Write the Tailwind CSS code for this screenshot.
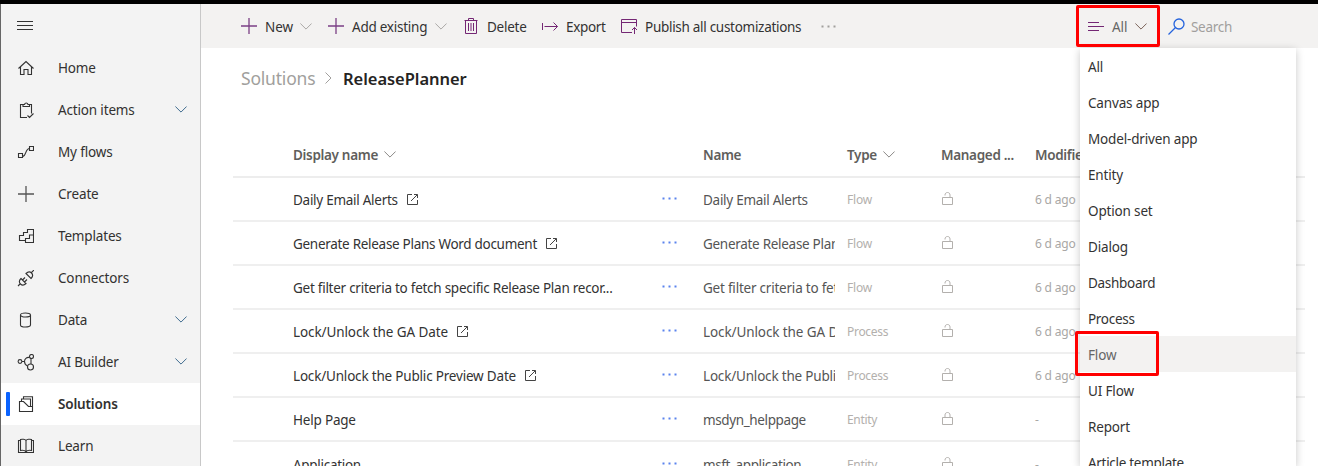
<!DOCTYPE html>
<html lang="en">
<head>
<meta charset="utf-8">
<title>ReleasePlanner</title>
<script src="https://cdn.jsdelivr.net/npm/@tailwindcss/browser@4"></script>
</head>
<body class="h-[466px] w-[1318px] overflow-hidden bg-white font-['Noto_Sans',sans-serif] text-[13.5px] leading-5 tracking-[-0.2px] text-[#323130]">
<svg class="hidden">
  <symbol id="down" viewBox="0 0 12 7"><path d="M.4.5 6 6.1 11.6.5" fill="none" stroke="currentColor"/></symbol>
  <symbol id="open" viewBox="0 0 11 11"><path d="M5 .5H.5v10h10V6M7 .5h3.5V4M10.3.7 4 7" fill="none" stroke="currentColor"/></symbol>
  <symbol id="dots" viewBox="0 0 16 3"><path d="M.5.5h2v2h-2zM6.5.5h2v2h-2zM12.5.5h2v2h-2z" fill="currentColor"/></symbol>
  <symbol id="unlock" viewBox="0 0 11 13"><path d="M.5 5.500h10v7H.5zM3 3.500V3C3 1.500 4 .5 5.500.5S8 1.500 8 3v2.500" fill="none" stroke="currentColor"/></symbol>
  <symbol id="lock" viewBox="0 0 11 13"><path d="M.5 5.500h10v7H.5zM3 5.500V3C3 1.500 4 .5 5.500.5S8 1.500 8 3v2.500" fill="none" stroke="currentColor"/></symbol>
  <symbol id="plus" viewBox="0 0 16 16"><path d="M8 0v16M0 8h16" fill="none" stroke="currentColor" stroke-width="1.3"/></symbol>
</svg>
<div class="h-1 bg-black"></div>
<div class="flex h-[462px]">
  <nav class="w-[201px] shrink-0 border-r border-l border-l-[#666] border-r-[#c8c8c8] bg-[#f3f3f3] tracking-[-0.16px]">
    <div class="flex h-[43px] items-center pl-4"><svg class="h-[9px] w-4" viewBox="0 0 16 9"><path d="M0 .5h16M0 4.500h16M0 8.500h16" stroke="#333"/></svg></div>
    <a class="flex h-[42px] items-center pl-4"><svg class="mr-6 size-[17px]" viewBox="0 0 17 17" fill="none" stroke="#333" stroke-width="1.1"><path d="M1.500 8.500 9 1.500l7.500 7M3.500 7v7.500H7V9.500h4v5h3.500V7"/></svg><span>Home</span></a>
    <a class="flex h-[42px] items-center pl-4"><svg class="mr-6 size-[17px]" viewBox="0 0 17 17" fill="none" stroke="#333" stroke-width="1.1"><path d="M10 15.500H3.500v-13H6M12 2.500h2.500v9M6 4.500v-2h1.500C8 .5 10.500.5 11 2.500h1.500v2zM10.500 13.500l2 2 4-4"/></svg><span class="flex-1">Action items</span><svg class="mr-[13px] mb-[2px] h-[7px] w-3 text-[#3f6c8f]"><use href="#down"/></svg></a>
    <a class="flex h-[42px] items-center pl-4"><svg class="mr-6 size-[17px]" viewBox="0 0 17 17" fill="none" stroke="#333" stroke-width="1.1"><path d="M1.500 9.500h4v4h-4zM12.500 2.500h4v4h-4zM5.500 12.500C9.500 12.500 8 4.500 12.500 4.500"/></svg><span>My flows</span></a>
    <a class="flex h-[42px] items-center pl-4"><svg class="mr-6 size-[17px] pl-px pb-px text-[#555]"><use href="#plus"/></svg><span>Create</span></a>
    <a class="flex h-[42px] items-center pl-4"><svg class="mr-6 size-[17px]" viewBox="0 0 17 17" fill="none" stroke="#333" stroke-width="1.1"><path d="M8.500 14.500v-4h4V7h4v7.500zM8.500 12.500h-6v-5h4v-3h4v-3h6V7"/></svg><span>Templates</span></a>
    <a class="flex h-[42px] items-center pl-4"><svg class="mr-6 size-[17px]" viewBox="0 0 17 17" fill="none" stroke="#333" stroke-width="1.1"><path d="M1 16l2.500-2.500M14.500 2.500 17 0M4 8.500l5 5c-2 2-4 2-5.500.5S2 10.500 4 8.500zM9 3.500l5 5c2-2 2-4 .5-5.500S11 1.500 9 3.500zM5.500 10 8 7.500M7.500 12 10 9.500"/></svg><span>Connectors</span></a>
    <a class="flex h-[42px] items-center pl-4"><svg class="mr-6 size-[17px]" viewBox="0 0 17 17" fill="none" stroke="#333" stroke-width="1.1"><ellipse cx="8.500" cy="3" rx="5" ry="2"/><path d="M3.500 3v10c0 2.700 10 2.700 10 0V3"/></svg><span class="flex-1">Data</span><svg class="mr-[13px] mb-[2px] h-[7px] w-3 text-[#3f6c8f]"><use href="#down"/></svg></a>
    <a class="flex h-[42px] items-center pl-4"><svg class="mr-6 size-[17px]" viewBox="0 0 17 17" fill="none" stroke="#333" stroke-width="1.1"><circle cx="3" cy="7.500" r="1.900"/><circle cx="14.500" cy="2.500" r="2"/><circle cx="13.500" cy="13" r="3"/><path d="M12.500 3.500c-3-.5-5 1.500-5 4 0 2.300 1 3.500 3 4.500M5 7.500h2.500M14 4.500V10"/></svg><span class="flex-1">AI Builder</span><svg class="mr-[13px] mb-[2px] h-[7px] w-3 text-[#3f6c8f]"><use href="#down"/></svg></a>
    <a class="flex h-[42px] items-center bg-white pl-[5px]"><i class="mr-[7px] h-6 w-1 rounded-[1px] bg-[#0b63ff]"></i><svg class="mr-6 size-[17px]" viewBox="0 0 17 17" fill="none" stroke="#333" stroke-width="1.1"><path d="M2.500 5.500h4l5 5h4v5h-13zM4.500 5V3h9v7.500M6.500 3V.8h9V10.500"/></svg><span class="font-semibold">Solutions</span></a>
    <a class="flex h-[42px] items-center pl-4"><svg class="mr-6 size-[17px]" viewBox="0 0 17 17" fill="none" stroke="#333" stroke-width="1.1"><path d="M3.500 2.500h-2v12h15v-12h-2M9 14V2.500C8 1.200 5 1 3.500 1.500v11c2-.4 4.500-.2 5.500 1.500 1-1.700 3.500-1.900 5.500-1.500v-11C13 1 10 1.200 9 2.500"/></svg><span>Learn</span></a>
  </nav>
  <main class="min-w-0 flex-1">
    <header class="flex h-11 items-center bg-[#f3f2f1] pl-10 tracking-[-0.1px] text-[#333]">
      <div class="flex w-[87px] items-center"><svg class="mr-2 size-4 text-[#7b3f85]"><use href="#plus"/></svg><span class="flex-1 pt-[2px]">New</span><svg class="mr-4 h-[7px] w-3 text-[#a9a7a5]"><use href="#down"/></svg></div>
      <div class="flex w-[135px] items-center"><svg class="mr-2 size-4 text-[#7b3f85]"><use href="#plus"/></svg><span class="flex-1 pt-[2px] tracking-[-0.25px]">Add existing</span><svg class="mr-4 h-[7px] w-3 text-[#a9a7a5]"><use href="#down"/></svg></div>
      <div class="flex w-[79px] items-center"><svg class="mr-[9px] ml-px h-4 w-[14px]" viewBox="0 0 14 16" fill="none" stroke="#742774"><path d="M.5 2.500h13M4.500 2.500v-2h5v2M1.500 2.500v13h11v-13M4.500 5v8M7 5v8M9.500 5v8"/></svg><span class="pt-[2px] tracking-[-0.25px]">Delete</span></div>
      <div class="flex w-[79px] items-center"><svg class="mr-2 h-[9px] w-4" viewBox="0 0 16 9" fill="none" stroke="#742774"><path d="M.5 1v7M2.500 4.500h13M11.500.5l4 4-4 4"/></svg><span class="pt-[2px] tracking-[-0.35px]">Export</span></div>
      <div class="flex w-[200px] items-center"><svg class="mr-2 h-[15px] w-4" viewBox="0 0 16 15" fill="none" stroke="#742774"><path d="M11 13.500H.5V.5h15v7M.5 3.500h15M13.500 15V8.500M11 11l2.500-2.500L16 11"/></svg><span class="pt-[2px] tracking-[-0.29px]">Publish all customizations</span></div>
      <svg class="h-[3px] w-4 text-[#a19f9d]"><use href="#dots"/></svg>
      <div class="ml-[251px] flex items-center"><svg class="mr-2 h-[9px] w-4" viewBox="0 0 16 9"><path d="M0 .5h11M0 4.500h16M0 8.500h11" stroke="#742774"/></svg><span class="w-[23px] pt-[2px] text-[#666]">All</span><svg class="h-[7px] w-3 text-[#7a6258]"><use href="#down"/></svg></div>
      <div class="ml-[21px] flex items-center"><svg class="mr-[6px] size-[17px]" viewBox="0 0 17 17" fill="none" stroke="#2463dd" stroke-width="1.300"><circle cx="11" cy="6" r="5"/><path d="M7.500 9.500.5 16.500"/></svg><span class="pt-px tracking-[-0.3px] text-[#a19f9d]">Search</span></div>
    </header>
    <div class="flex h-[60px] items-center pl-10 text-[17.500px]"><span class="w-[84px] text-[#a19f9d]">Solutions</span><svg class="mr-[11px] h-3 w-[7px]" viewBox="0 0 7 12" fill="none" stroke="#a19f9d"><path d="m.5.500 5.500 5.500L.5 11.500"/></svg><span class="pt-px text-[16.500px] tracking-[-0.05px] font-semibold text-[#252423]">ReleasePlanner</span></div>
    <section class="mt-[25px] ml-8 w-[1072px] text-[#333]">
      <div class="grid h-[45px] grid-cols-[60px_369px_41px_132px_12px_94px_94px_270px] items-center border-b-2 border-[#ededed] pt-px font-semibold tracking-[-0.32px] text-[#605e5c]">
        <i></i><span class="flex items-center">Display name<svg class="mb-[2px] ml-[6px] h-[7px] w-3 text-[#8a8886]"><use href="#down"/></svg></span><i></i><span>Name</span><i></i><span class="flex items-center">Type<svg class="mb-[2px] ml-[6px] h-[7px] w-3 text-[#8a8886]"><use href="#down"/></svg></span><span>Managed ...</span><span>Modified</span>
      </div>
      <div class="grid h-11 grid-cols-[60px_369px_41px_132px_12px_94px_94px_270px] items-center border-b-2 border-[#efefef] pt-px"><i></i><span class="flex items-center tracking-[-0.27px]">Daily Email Alerts<svg class="ml-[9px] size-[11px] text-[#444]"><use href="#open"/></svg></span><svg class="mb-[2px] h-[3px] w-4 text-[#5b83ee]"><use href="#dots"/></svg><span class="overflow-hidden tracking-[-0.27px] whitespace-nowrap text-[#555]">Daily Email Alerts</span><i></i><span class="text-[12px] text-[#b3b0ad]">Flow</span><svg class="mb-[2px] ml-px h-[13px] w-[11px] text-[#b3b0ad]"><use href="#unlock"/></svg><span class="text-[12px] text-[#a9a7a5]">6 d ago</span></div>
      <div class="grid h-11 grid-cols-[60px_369px_41px_132px_12px_94px_94px_270px] items-center border-b-2 border-[#efefef] pt-px"><i></i><span class="flex items-center tracking-[-0.29px]">Generate Release Plans Word document<svg class="ml-[9px] size-[11px] text-[#444]"><use href="#open"/></svg></span><svg class="mb-[2px] h-[3px] w-4 text-[#5b83ee]"><use href="#dots"/></svg><span class="overflow-hidden tracking-[-0.29px] whitespace-nowrap text-[#555]">Generate Release Plans Word document</span><i></i><span class="text-[12px] text-[#b3b0ad]">Flow</span><svg class="mb-[2px] ml-px h-[13px] w-[11px] text-[#b3b0ad]"><use href="#unlock"/></svg><span class="text-[12px] text-[#a9a7a5]">6 d ago</span></div>
      <div class="grid h-11 grid-cols-[60px_369px_41px_132px_12px_94px_94px_270px] items-center border-b-2 border-[#efefef] pt-px"><i></i><span class="tracking-[-0.26px]">Get filter criteria to fetch specific Release Plan recor...</span><svg class="mb-[2px] h-[3px] w-4 text-[#5b83ee]"><use href="#dots"/></svg><span class="overflow-hidden tracking-[-0.22px] whitespace-nowrap text-[#555]">Get filter criteria to fetch specific</span><i></i><span class="text-[12px] text-[#b3b0ad]">Flow</span><svg class="mb-[2px] ml-px h-[13px] w-[11px] text-[#b3b0ad]"><use href="#unlock"/></svg><span class="text-[12px] text-[#a9a7a5]">6 d ago</span></div>
      <div class="grid h-11 grid-cols-[60px_369px_41px_132px_12px_94px_94px_270px] items-center border-b-2 border-[#efefef] pt-px"><i></i><span class="flex items-center tracking-[-0.1px]">Lock/Unlock the GA Date<svg class="ml-[9px] size-[11px] text-[#444]"><use href="#open"/></svg></span><svg class="mb-[2px] h-[3px] w-4 text-[#5b83ee]"><use href="#dots"/></svg><span class="overflow-hidden tracking-[-0.1px] whitespace-nowrap text-[#555]">Lock/Unlock the GA Date</span><i></i><span class="text-[12px] tracking-[-0.3px] text-[#b3b0ad]">Process</span><svg class="mb-[2px] ml-px h-[13px] w-[11px] text-[#b3b0ad]"><use href="#unlock"/></svg><span class="text-[12px] text-[#a9a7a5]">6 d ago</span></div>
      <div class="grid h-11 grid-cols-[60px_369px_41px_132px_12px_94px_94px_270px] items-center border-b-2 border-[#efefef] pt-px"><i></i><span class="flex items-center tracking-[-0.19px]">Lock/Unlock the Public Preview Date<svg class="ml-[9px] size-[11px] text-[#444]"><use href="#open"/></svg></span><svg class="mb-[2px] h-[3px] w-4 text-[#5b83ee]"><use href="#dots"/></svg><span class="overflow-hidden tracking-[-0.19px] whitespace-nowrap text-[#555]">Lock/Unlock the Public Preview Date</span><i></i><span class="text-[12px] tracking-[-0.3px] text-[#b3b0ad]">Process</span><svg class="mb-[2px] ml-px h-[13px] w-[11px] text-[#b3b0ad]"><use href="#unlock"/></svg><span class="text-[12px] text-[#a9a7a5]">6 d ago</span></div>
      <div class="grid h-11 grid-cols-[60px_369px_41px_132px_12px_94px_94px_270px] items-center border-b-2 border-[#efefef] pt-px"><i></i><span>Help Page</span><svg class="mb-[2px] h-[3px] w-4 text-[#5b83ee]"><use href="#dots"/></svg><span class="tracking-[-0.38px] text-[#555]">msdyn_helppage</span><i></i><span class="text-[12px] tracking-[-0.3px] text-[#b3b0ad]">Entity</span><svg class="mb-[2px] ml-px h-[13px] w-[11px] text-[#b3b0ad]"><use href="#lock"/></svg><span class="text-[12px] text-[#a9a7a5]">-</span></div>
      <div class="grid h-11 grid-cols-[60px_369px_41px_132px_12px_94px_94px_270px] items-center pt-px"><i></i><span class="tracking-[-0.3px]">Application</span><svg class="mb-[2px] h-[3px] w-4 text-[#5b83ee]"><use href="#dots"/></svg><span class="tracking-[-0.4px] text-[#555]">msft_application</span><i></i><span class="text-[12px] tracking-[-0.3px] text-[#b3b0ad]">Entity</span><svg class="mb-[2px] ml-px h-[13px] w-[11px] text-[#b3b0ad]"><use href="#unlock"/></svg><span class="text-[12px] text-[#a9a7a5]">-</span></div>
    </section>
  </main>
</div>
<ul class="absolute top-12 left-[1080px] h-[418px] w-[216px] overflow-hidden bg-white tracking-[-0.16px] text-[#333] shadow-[0_2px_8px_rgba(0,0,0,0.22)] [&>li]:flex [&>li]:h-9 [&>li]:items-center [&>li]:pt-[2px] [&>li]:pl-2">
  <li>All</li><li>Canvas app</li><li>Model-driven app</li><li>Entity</li><li>Option set</li><li>Dialog</li><li class="tracking-[-0.3px]">Dashboard</li><li class="tracking-[-0.3px]">Process</li><li class="bg-[#f3f2f1] text-[#666]">Flow</li><li>UI Flow</li><li>Report</li><li class="tracking-[-0.3px]">Article template</li>
</ul>
<div class="absolute top-[5px] left-[1076px] h-[42px] w-[84px] rounded-[2px] border-3 border-[#ff0000]"></div>
<div class="absolute top-[331px] left-[1075px] h-[45px] w-[84px] rounded-[2px] border-3 border-[#ff0000]"></div>
</body>
</html>
